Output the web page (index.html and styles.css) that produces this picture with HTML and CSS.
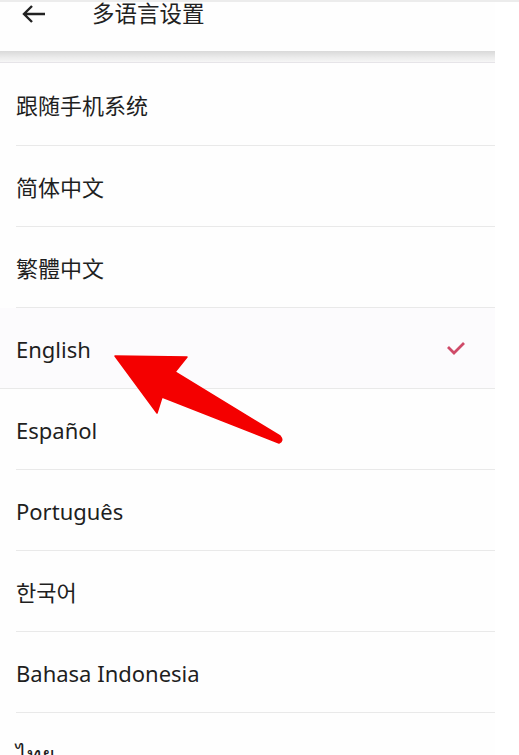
FILE: index.html
```html
<!DOCTYPE html>
<html lang="zh">
<head>
<meta charset="utf-8">
<link rel="stylesheet" href="styles.css">
</head>
<body>
<div class="statusline"></div>
<div class="page">
  <header class="header">
    <svg class="back" viewBox="0 0 24 20" width="24" height="20">
      <path d="M23 10H2M10 2L2 10l8 8" fill="none" stroke="#222" stroke-width="2.4" stroke-linecap="butt"/>
    </svg>
    <h1 class="title">多语言设置</h1>
  </header>
  <div class="shadow"></div>
  <ul class="list">
    <li class="row"><span>跟随手机系统</span></li>
    <li class="row"><span>简体中文</span></li>
    <li class="row"><span>繁體中文</span></li>
    <li class="row selected"><span>English</span>
      <svg class="check" viewBox="0 0 20 14" width="20" height="14"><path d="M2 6l6 6 10-10" fill="none" stroke="#cf4a68" stroke-width="2.8"/></svg>
    </li>
    <li class="row"><span>Español</span></li>
    <li class="row"><span>Português</span></li>
    <li class="row"><span>한국어</span></li>
    <li class="row"><span>Bahasa Indonesia</span></li>
    <li class="row"><span>ไทย</span></li>
  </ul>
</div>
<svg class="pointer" viewBox="0 0 519 755" width="519" height="755">
  <path d="M115 356 L187 357 L175 372 L280 436 Q284 441 279 443 L162 397 L157 413 Z" fill="#f40000" stroke="#f40000" stroke-width="1.5" stroke-linejoin="round"/>
</svg>
</body>
</html>
```
FILE: styles.css
```css
html, body {
  margin: 0;
  padding: 0;
  background: #ffffff;
  width: 519px;
  height: 755px;
  overflow: hidden;
  font-family: "Noto Sans", "Noto Sans CJK SC", sans-serif;
  color: #1f1f1f;
}
.statusline {
  height: 2px;
  background: #ececec;
}
.page {
  width: 495px;
  background: #fefefe;
}
.header {
  height: 49px;
  display: flex;
  align-items: flex-start;
  background: #fefefe;
}
.back {
  margin: 2px 0 0 22px;
}
.title {
  margin: -5px 0 0 46px;
  font-size: 22.5px;
  font-weight: 400;
  line-height: 30px;
  color: #222;
  font-family: "Noto Sans CJK SC", sans-serif;
}
.shadow {
  height: 11px;
  background: linear-gradient(#d9d9d9, #ececec 60%, #f6f6f6);
  border-bottom: 1px solid #e6e4e8;
}
.list {
  list-style: none;
  margin: 0;
  padding: 0 0 0 16px;
}
.row {
  height: 80px;
  border-bottom: 1px solid #e9e9e9;
  display: flex;
  align-items: center;
  justify-content: space-between;
  font-size: 22px;
  padding-right: 29px;
}
.row:first-child {
  height: 82px;
}
.row span {
  line-height: 30px;
  padding-top: 2px;
}
.selected {
  background: #fcfbfd;
  margin-left: -16px;
  padding-left: 16px;
}
.pointer {
  position: absolute;
  left: 0;
  top: 0;
  pointer-events: none;
}
```
